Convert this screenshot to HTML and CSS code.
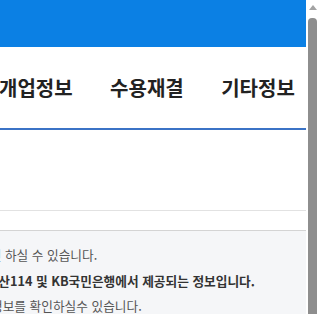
FILE: index.html
```html
<!DOCTYPE html>
<html lang="ko">
<head>
  <meta charset="UTF-8" />
  <meta name="viewport" content="width=device-width, initial-scale=1.0"/>
  <title>상권정보</title>
  <link rel="stylesheet" href="styles.css">
</head>
<body>

  <div class="frame">
    <div class="page">
      <div class="header"></div>

      <div class="tabs">
        <span class="tab">개업정보</span>
        <span class="tab">수용재결</span>
        <span class="tab">기타정보</span>
      </div>

      <div class="panel"></div>
      <div class="spacer"></div>

      <div class="notice">
        <p class="line shift-a">확인 하실 수 있습니다.</p>
        <p class="line strong shift-b">부동산114 및 KB국민은행에서 제공되는 정보입니다.</p>
        <p class="line shift-c">정보를 확인하실수 있습니다.</p>
      </div>
    </div>

    <div class="scrollbar">
      <div class="arrow"></div>
      <div class="thumb"></div>
    </div>
  </div>

</body>
</html>
```

FILE: styles.css
```css
:root {
  --blue: #0b80e4;
  --tab-line: #3b73c6;
  --text: #222;
  --muted: #555;
  --notice-bg: #f5f6f8;
}

body {
  margin: 0;
  height: 314px;
  overflow: hidden;
  background: #fff;
  font-family: 'Noto Sans CJK KR', 'Noto Sans', sans-serif;
}

.frame {
  display: flex;
  height: 314px;
}

.page {
  width: 306px;
  overflow: hidden;
  display: flex;
  flex-direction: column;
}

.header,
.tabs,
.panel,
.spacer {
  flex-shrink: 0;
}

.header {
  height: 47px;
  background: var(--blue);
}

.tabs {
  display: flex;
  gap: 37.5px;
  padding: 31px 0 30px 0;
  margin-left: -1px;
  border-bottom: 2px solid var(--tab-line);
}

.tab {
  font-size: 20px;
  line-height: 20px;
  font-weight: bold;
  color: var(--text);
  white-space: nowrap;
}

.panel {
  height: 80px;
  border-bottom: 1px solid #e2e2e2;
}

.spacer {
  height: 19px;
  border-bottom: 1px solid #d4d4d4;
}

.notice {
  flex: 1;
  background: var(--notice-bg);
  padding-top: 11px;
}

.line {
  margin: 0;
  font-size: 12.7px;
  line-height: 25.5px;
  color: var(--muted);
  white-space: nowrap;
}

.strong {
  font-weight: bold;
  color: #333;
}

.shift-a { margin-left: -22px; }
.shift-b { margin-left: -25px; }
.shift-c { margin-left: -9px; }

.scrollbar {
  width: 9px;
  padding: 0 2px;
  display: flex;
  flex-direction: column;
  align-items: center;
  background: #fff;
}

.arrow {
  margin-top: 5px;
  width: 0;
  height: 0;
  border-left: 4px solid transparent;
  border-right: 4px solid transparent;
  border-bottom: 5px solid #a3a3a3;
}

.thumb {
  margin-top: 8px;
  width: 9px;
  flex: 1;
  background: #8e8e8e;
  border-radius: 4px 4px 0 0;
}
```
